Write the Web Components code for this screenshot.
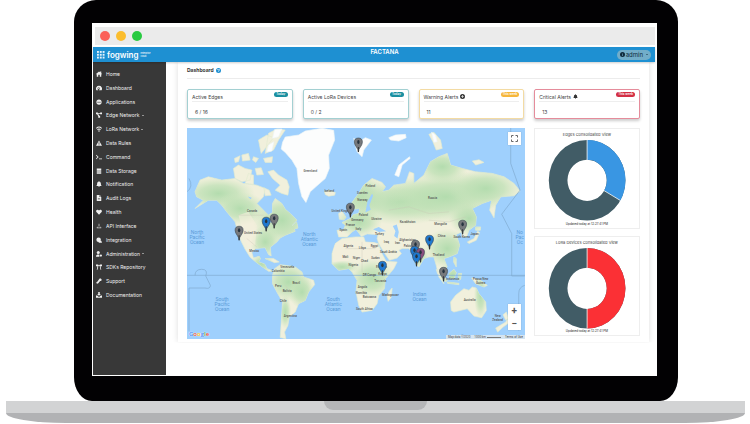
<!DOCTYPE html>
<html lang="en">
<head>
<meta charset="utf-8">
<title>Fogwing – Dashboard</title>
<style>
  body { margin: 0; background: #fff; font-family: Inter, "Open Sans", sans-serif; font-size: 5px; line-height: 8px; color: #444; }
</style>
</head>
<body>
<laptop-frame>
  <window-bar slot="bar"></window-bar>
  <app-header slot="header" user="admin">FACTANA</app-header>
  <side-nav slot="nav">
    <nav-item icon="home">Home</nav-item>
    <nav-item icon="gauge">Dashboard</nav-item>
    <nav-item icon="apps">Applications</nav-item>
    <nav-item icon="nodes" caret>Edge Network</nav-item>
    <nav-item icon="wifi" caret>LoRa Network</nav-item>
    <nav-item icon="warn">Data Rules</nav-item>
    <nav-item icon="terminal">Command</nav-item>
    <nav-item icon="db">Data Storage</nav-item>
    <nav-item icon="bell">Notification</nav-item>
    <nav-item icon="file">Audit Logs</nav-item>
    <nav-item icon="heart">Health</nav-item>
    <nav-item icon="api">API Interface</nav-item>
    <nav-item icon="puzzle">Integration</nav-item>
    <nav-item icon="admin" caret>Administration</nav-item>
    <nav-item icon="sdk">SDKs Repository</nav-item>
    <nav-item icon="support">Support</nav-item>
    <nav-item icon="docs">Documentation</nav-item>
  </side-nav>
  <dashboard-page>
    <span slot="title">Dashboard</span>
    <stat-card slot="stats" badge="Today" style="--line:#a3d0d2;--tag:#1a8fa0">Active Edges<span slot="value">6 / 16</span></stat-card>
    <stat-card slot="stats" badge="Today" style="--line:#a3d0d2;--tag:#1a8fa0">Active LoRa Devices<span slot="value">0 / 2</span></stat-card>
    <stat-card slot="stats" badge="This week" icon="plus" style="--line:#f3dba3;--tag:#f6b73c">Warning Alerts<span slot="value">11</span></stat-card>
    <stat-card slot="stats" badge="This week" icon="bell" style="--line:#e58c9b;--tag:#d32f45">Critical Alerts<span slot="value">13</span></stat-card>
    <world-map slot="map"></world-map>
    <donut-chart slot="charts" share="120" color="#3996e3" note="Updated today at 12:27:41 PM">Edges Consolidated View</donut-chart>
    <donut-chart slot="charts" share="180" color="#fb3035" note="Updated today at 12:27:41 PM">LoRa Devices Consolidated View</donut-chart>
  </dashboard-page>
</laptop-frame>

<script>
const define = (name, render) => customElements.define(name, class extends HTMLElement {
  constructor() { super(); this.attachShadow({ mode: 'open' }); }
  connectedCallback() { this.shadowRoot.innerHTML = render(this); }
});

const ICONS = {
  home: '<path d="M0 8 8 1l3 2V1h3v5l2 2-1 1-1-1v7h-4v-5H6v5H2V8L1 9z"/>',
  gauge: '<path fill-rule="evenodd" d="M8 2a8 8 0 0 1 7 12H1A8 8 0 0 1 8 2zm3 3-4 5a2 2 0 1 0 2 1zM3 9v2h2V9zM5 5v2h2V5z"/>',
  apps: '<path fill-rule="evenodd" d="M8 1a7 7 0 1 1 0 14A7 7 0 0 1 8 1zM4 7v3h3V7zm5 0v3h3V7z"/>',
  nodes: '<path d="M0 1h5v2h6V1h5v5h-5V5H6l3 5h2v5H6v-4L3 6H0z"/>',
  wifi: '<path d="M0 5a12 12 0 0 1 16 0l-2 2A9 9 0 0 0 2 7zm3 4a7 7 0 0 1 10 0l-2 2a4 4 0 0 0-6 0z"/><circle cx="8" cy="13" r="2"/>',
  warn: '<path fill-rule="evenodd" d="m8 1 8 14H0zM7 6v5h2V6zm0 6v2h2v-2z"/>',
  terminal: '<path d="m1 2 6 6-6 6-1-2 4-4-4-4zM8 12h8v2H8z"/>',
  db: '<path d="M2 1h12v4H2zm0 5h12v4H2zm0 5h12v4H2z"/>',
  bell: '<path d="M8 0a2 2 0 0 1 1 2c3 0 4 3 4 5 0 3 1 4 2 6H1c1-2 2-3 2-6 0-2 1-5 4-5a2 2 0 0 1 1-2zM6 14h4a2 2 0 0 1-4 0z"/>',
  file: '<path fill-rule="evenodd" d="M2 0h7v5h5v11H2zm8 0 4 4h-4zM5 8v1h6V8zm0 3v1h6v-1z"/>',
  heart: '<path d="M8 15 1 8c-3-5 4-9 7-4 3-5 10-1 7 4z"/>',
  api: '<path d="M7 2h2v5l5 4v3H2v-3l5-4zM4 10v2h8v-2L8 8z" opacity=".8"/>',
  puzzle: '<circle cx="7" cy="7" r="6"/><path d="M8 10h6l2 5H7z"/>',
  admin: '<circle cx="6" cy="4" r="4"/><path d="M0 15c0-4 2-6 6-6l3 1v5z"/><circle cx="13" cy="12" r="3"/>',
  sdk: '<path d="M0 1h6v2h4V1h6v5h-4l2 9h-2l-2-9V5H6v2L4 15H2l2-9H0z"/>',
  support: '<path d="M9 2c3-2 6 0 6 3 0 2-2 3-4 3l-5 6c-2 2-6 1-5-2 0-2 2-2 3-3z"/>',
  docs: '<path d="M6 0h4v5h3l-5 5-5-5h3zM0 9h3l5 4 5-4h3v6H0z"/>',
  plus: '<path fill-rule="evenodd" d="M8 0a8 8 0 1 1 0 16A8 8 0 0 1 8 0zM7 3v4H3v2h4v4h2V9h4V7H9V3z"/>',
  help: '<path fill-rule="evenodd" d="M8 0a8 8 0 1 1 0 16A8 8 0 0 1 8 0zM4 6h2c0-2 4-2 4 0 0 1-3 2-3 4h2c0-2 3-2 3-4 0-4-8-4-8 0zm3 5v2h2v-2z"/>',
  info: '<path fill-rule="evenodd" d="M8 0a8 8 0 1 1 0 16A8 8 0 0 1 8 0zM7 3v2h2V3zm0 3v7h2V6z"/>'
};
const icon = n => `<svg viewBox="0 0 16 16" fill="currentColor" aria-hidden="true">${ICONS[n]}</svg>`;

define('laptop-frame', () => `<style>
  :host { display: block; }
  .lid { margin: 0 72px 0 74px; padding: 23px 21px 25px 18px; background: #020103; border-radius: 22px 22px 18px 18px / 22px 22px 24px 24px; }
  .screen { background: #fff; padding: 4px 2px 1px 1px; }
  .cols { display: grid; grid-template-columns: 73px 1fr; }
  .base { margin: 0 5px 0 6px; border-radius: 0 0 60px 60px / 0 0 10px 10px; background: linear-gradient(#d2d3d4 0 12px, #b1b2b4 12px); height: 22px; display: flex; justify-content: center; }
  .notch { width: 14%; height: 9px; background: #b5b6b8; border-radius: 0 0 9px 9px; }
</style>
<div class="lid"><div class="screen"><slot name="bar"></slot><slot name="header"></slot>
<div class="cols"><slot name="nav"></slot><slot></slot></div></div></div>
<div class="base"><div class="notch"></div></div>`);

define('window-bar', () => `<style>
  :host { display: flex; gap: 6px; align-items: center; height: 18px; padding-left: 5px; margin: 0 0 2px 2px; background: #ebebeb; }
  i { width: 10px; height: 10px; border-radius: 50%; }
</style><i style="background:#fb6058"></i><i style="background:#fbbd2e"></i><i style="background:#28ca41"></i>`);

define('app-header', el => `<style>
  :host { position: relative; display: grid; grid-template-columns: 13fr auto 12fr; align-items: center; height: 15px; padding: 0 4px; background: #1e90d2; color: #fff; z-index: 1; box-shadow: 0 1px 2px #0003; }
  .logo { display: flex; align-items: center; gap: 2px; font: 600 8px/12px Inter, sans-serif; color: #fff; text-decoration: none; }
  .logo svg { width: 8px; height: 8px; }
  small { font: 500 2px/3px Inter, sans-serif; }
  h1 { margin: 0 0 5px; font: 600 6px/8px Inter, sans-serif; }
  button { justify-self: end; display: flex; align-items: center; gap: 1px; height: 10px; padding: 0 3px; border: 0; border-radius: 5px; background: #72adc9; color: #102a3c; font: 6px/10px Inter, sans-serif; }
  button svg { width: 5px; height: 5px; }
  button::after { content: ""; margin-left: 2px; border: 1px solid transparent; border-top-color: currentColor; border-bottom: 0; }
</style>
<a class="logo" href="#"><svg viewBox="0 0 17 17" fill="#e6f3fb">${[0, 6, 12].map(y => [0, 6, 12].map(x => `<rect x="${x}" y="${y}" width="4" height="4"/>`).join('')).join('')}</svg><span>fogwing</span><small>Enterprise<br>Cloud</small></a>
<h1><slot></slot></h1>
<button type="button">${icon('info')}${el.getAttribute('user')}</button>`);

define('side-nav', () => `<style>
  :host { display: block; background: #383838; color: #f0f0f0; padding: 5px 3px 73px; box-sizing: border-box; }
  nav { display: grid; grid-auto-rows: 1fr; min-height: 235px; }
</style><nav aria-label="Main"><slot></slot></nav>`);

define('nav-item', el => `<style>
  :host { display: block; align-self: center; }
  a { display: flex; align-items: center; gap: 4px; color: inherit; text-decoration: none; line-height: 8px; }
  svg { width: 6px; height: 6px; }
  .c { margin-left: -2px; border: 1px solid transparent; border-top-color: currentColor; border-bottom: 0; }
</style><a href="#">${icon(el.getAttribute('icon'))}<span><slot></slot></span>${el.hasAttribute('caret') ? '<i class="c"></i>' : ''}</a>`);

define('dashboard-page', () => `<style>
  :host { display: block; padding: 0 6px 0 12px; }
  main { padding: 4px 9px 3px; box-shadow: 0 0 6px #0002; clip-path: inset(0 -8px 0 -8px); }
  h2 { display: flex; align-items: center; gap: 2px; margin: 0 0 10px; padding-bottom: 4px; border-bottom: 1px solid #ececec; font: 700 5px/8px Inter, sans-serif; color: #333; }
  h2 svg { width: 5px; height: 5px; color: #1e90d2; }
  .stats { display: grid; grid-template-columns: repeat(4, 1fr); gap: 10px; margin-bottom: 9px; }
  .body { display: grid; grid-template-columns: 337fr 106fr; gap: 9px; align-items: start; }
  .charts { display: grid; gap: 7px; }
</style>
<main><h2><slot name="title"></slot>${icon('help')}</h2>
<div class="stats"><slot name="stats"></slot></div>
<div class="body"><slot name="map"></slot><div class="charts"><slot name="charts"></slot></div></div></main>`);

define('stat-card', el => `<style>
  :host { display: block; box-sizing: border-box; min-width: 0; height: 30px; padding: 2px 4px; border: 1px solid var(--line); border-radius: 2px; box-shadow: 0 2px 3px #0003; background: #fff; }
  .top { display: flex; align-items: center; gap: 2px; height: 9px; border-bottom: 1px solid #eee; white-space: nowrap; }
  .top svg { width: 5px; height: 5px; color: #333; }
  .tag { margin-left: auto; align-self: flex-start; min-width: 10px; padding: 0 2px; text-align: center; border-radius: 3px; background: var(--tag); color: #fff; font: 600 3px/5px Inter, sans-serif; }
  .val { padding: 6px 3px 0; line-height: 8px; }
</style><div class="top"><span><slot></slot></span>${el.hasAttribute('icon') ? icon(el.getAttribute('icon')) : ''}<span class="tag">${el.getAttribute('badge')}</span></div><div class="val"><slot name="value"></slot></div>`);

define('donut-chart', el => {
  const a = el.getAttribute('share') * Math.PI / 180;
  const pt = (rx, ry) => `${53 + rx * Math.sin(a)} ${42 - ry * Math.cos(a)}`;
  const seg = `M53 1A39 41 0 0 1 ${pt(39, 41)}L${pt(20, 21)}A20 21 0 0 0 53 21Z`;
  return `<style>
  :host { display: flex; flex-direction: column; align-items: center; border: 1px solid #eee; padding: 2px 0 1px; box-sizing: border-box; background: #fff; font-size: 4px; line-height: 8px; white-space: nowrap; }
  svg { display: block; width: 100%; }
  p { margin: 0; font-size: 3px; line-height: 5px; color: #222; }
</style><span><slot></slot></span>
<svg viewBox="0 0 106 84" role="img" aria-label="Donut chart"><path fill="#415c66" fill-rule="evenodd" d="M14 42a39 41 0 1 0 78 0a39 41 0 1 0-78 0zm19 0a20 21 0 1 1 40 0a20 21 0 1 1-40 0z"/><path fill="${el.getAttribute('color')}" d="${seg}"/><path stroke="#fff" stroke-width=".8" d="M53 1V22M${pt(19, 20)}L${pt(39, 41)}"/></svg>
<p>${el.getAttribute('note')}</p>`;
});

const LAND = [
  'M30 200 45 165 70 155 110 165 150 160 175 175 215 180 240 190 235 215 215 235 235 255 250 270 262 262 262 235 270 220 290 235 300 252 315 265 335 285 320 300 330 318 300 330 285 338 275 350 255 366 258 392 250 388 240 367 212 370 200 382 205 398 222 393 226 400 220 410 238 416 246 430 262 437 250 438 235 427 212 410 195 396 180 372 168 348 158 320 150 290 125 260 110 240 95 225 70 225 30 250 55 225 35 215Z',
  'M262 450 268 430 285 418 300 420 330 425 350 440 355 455 385 465 388 478 370 500 360 525 340 535 330 560 312 575 308 600 298 620 302 640 285 636 288 590 292 530 275 500 262 475Z',
  'M500 232 520 205 535 180 560 160 590 172 600 185 590 200 610 195 625 180 660 175 672 140 685 145 685 175 715 150 735 110 760 95 785 85 795 120 830 130 870 140 920 145 955 155 985 175 1003 198 985 212 945 215 930 240 925 278 912 255 918 225 890 235 860 250 872 275 870 300 850 315 843 335 830 335 828 320 812 328 822 360 815 385 790 395 775 400 785 425 770 440 760 430 768 455 775 475 760 455 752 420 745 395 730 395 715 400 700 425 690 415 683 385 670 370 650 370 640 375 648 385 635 398 612 405 598 385 580 355 575 340 578 328 545 326 528 334 512 312 500 320 485 335 460 335 455 315 475 314 480 300 470 292 495 280 505 268 520 265 523 250 505 252Z',
  'M440 385 450 355 470 340 510 335 535 335 540 350 565 352 578 355 590 385 602 408 635 410 625 430 600 460 597 490 580 510 575 535 560 555 530 560 520 540 512 500 515 465 500 440 490 430 460 435 440 415Z',
  'M795 530 810 510 835 490 850 495 860 485 872 488 880 505 900 530 902 555 888 577 865 572 845 550 805 560 797 555Z',
  'M605 512 612 497 620 488 618 515 608 528ZM462 282 460 265 470 258 482 276 476 284ZM418 200 432 195 450 202 448 210 430 213 420 208ZM930 608 960 590 966 580 970 592 952 605 936 620ZM952 568 962 560 968 580 960 584Z',
  'M752 432 785 465 780 470 756 445ZM790 445 805 432 812 442 805 460 792 458ZM785 470 820 474 820 478 786 474ZM818 445 828 444 825 462 818 465ZM858 458 880 462 905 480 895 485 870 475ZM805 395 812 400 812 425 804 410ZM845 350 865 340 876 318 882 322 872 345 850 355ZM870 305 885 305 884 315 870 315ZM240 400 265 400 282 410 268 412Z',
  'M145 130 160 120 180 130 200 135 195 165 170 170 150 160ZM190 145 205 150 205 178 180 175ZM148 100 165 92 160 110 150 112ZM170 90 190 85 195 105 172 108ZM205 95 220 100 212 112 202 105ZM235 100 262 95 260 112 240 112ZM220 45 245 30 265 38 240 70 228 85ZM250 25 275 12 300 15 280 45 265 75 240 85ZM248 140 265 135 280 150 305 165 312 185 308 210 290 205 270 195 285 180 262 160ZM210 130 228 128 235 148 215 150ZM236 188 252 195 258 210 240 212ZM860 108 880 104 895 112 870 120ZM730 28 745 22 765 45 770 70 752 75 742 50ZM318 305 334 290 338 308 325 312Z'
].join('');
const ICE = 'M288 72 292 52 300 36 340 30 360 18 410 10 445 16 448 45 430 90 432 130 420 160 395 182 375 200 362 232 350 215 340 175 335 130 320 105 300 82ZM505 40 520 50 540 38 558 45 535 75 530 95 515 80ZM628 150 640 120 672 95 674 100 650 120 640 155ZM610 38 630 30 660 28 662 38 640 48 615 45ZM738 22 750 30 755 50 745 52ZM268 14 290 12 280 35 262 40ZM250 60 266 50 260 78 245 80Z';
const LAKES = 'M563 312 580 305 602 318 580 320ZM622 302 634 298 640 320 636 340 626 332 630 318ZM540 262 546 230 560 205 563 212 552 240 556 254ZM242 286 262 284 270 292 256 292ZM188 214 200 218 196 222Z';
const GREEN = [[100,205,110,50],[165,250,80,50],[290,285,90,80],[240,350,45,50],[310,470,70,60],[350,500,40,50],[300,560,18,50],[530,215,70,70],[650,230,170,70],[780,215,170,80],[900,190,110,60],[850,280,60,50],[785,370,70,60],[560,460,70,60],[470,425,50,20],[520,290,70,45],[700,395,30,34],[800,450,40,40],[885,510,20,70],[770,125,80,50],[230,415,35,30]];
const LABELS = [['Greenland',310,172],['Iceland',329,192],['Canada',252,212],['United States',253,234],['Mexico',254,252],['Venezuela',287,268],['Colombia',278,272],['Brazil',296,284],['Peru',278,287],['Bolivia',287,292],['Chile',283,302],['Argentina',290,317],['Norway',362,201],['Finland',370,187],['Sweden',362,194],['Poland',363,216],['Ukraine',376,220],['Germany',357,221],['France',350,226],['Spain',343,231],['Italy',358,230],['United Kingdom',342,212],['Russia',432,199],['Kazakhstan',407,223],['Mongolia',440,225],['Turkey',379,235],['Iraq',386,243],['Iran',397,244],['Afghanistan',407,241],['Pakistan',409,247],['China',441,237],['Japan',474,235],['South Korea',461,238],['Algeria',348,247],['Libya',362,249],['Egypt',374,247],['Saudi Arabia',388,253],['Mali',345,258],['Niger',356,259],['Chad',364,262],['Sudan',375,259],['Nigeria',353,266],['Ethiopia',381,268],['Kenya',382,275],['DR Congo',369,276],['Tanzania',380,282],['Angola',362,288],['Namibia',361,294],['Botswana',369,298],['Madagascar',390,296],['South Africa',364,310],['Thailand',438,256],['Indonesia',452,280],['Papua New',480,280],['Guinea',480,284],['Australia',469,301],['New',497,317],['Zealand',497,321],['India',416,256]];
const OCEANS = [['North',197,234],['Pacific',197,239],['Ocean',197,244],['North',309,236],['Atlantic',309,241],['Ocean',309,246],['South',222,301],['Pacific',222,306],['Ocean',222,311],['South',333,301],['Atlantic',333,306],['Ocean',333,311],['Indian',419,296],['Ocean',419,301],['No',519,234],['Pac',519,239],['Oc',519,244]];
const PINS = [[239,240,0],[266,231,1],[274,228,0],[358,152,0],[350,217,0],[382,275,1],[415,254,0],[414,260,1],[420,262,2],[416,266,1],[429,249,1],[462,234,0],[443,281,0]];
const PIN_COLORS = ['#77797c', '#1f78cf', '#8a4f7d'];
const label = (cls, list) => list.map(([t, x, y]) => `<text class="${cls}" x="${x}" y="${y}">${t}</text>`).join('');

define('world-map', () => `<style>
  :host { position: relative; display: block; overflow: hidden; background: #9fd0fd; }
  svg.map { display: block; width: 100%; }
  text { font-family: Roboto, sans-serif; text-anchor: middle; }
  .p { font-size: 3px; font-weight: 500; fill: #555; }
  .o { font-size: 5px; fill: #5b9bd8; }
  .full, .zoom { position: absolute; right: 4px; background: #fff; box-shadow: 0 0 1px #0004; }
  .full { top: 4px; width: 13px; height: 13px; padding: 3px; border: 0; }
  .full svg { display: block; width: 7px; height: 7px; }
  .zoom { bottom: 9px; display: grid; width: 13px; }
  .zoom button { height: 13px; padding: 0; border: 0; background: none; color: #555; font: 700 10px/13px Roboto, sans-serif; }
  .legal { position: absolute; right: 0; bottom: 0; display: flex; gap: 4px; padding: 0 2px; background: #d5e4f0; font: 3px/4px Roboto, sans-serif; color: #444; }
  .legal a { color: inherit; text-decoration: none; }
  .scale { display: inline-block; width: 14px; margin-left: 1px; border-bottom: 1px solid #777; }
  .google { position: absolute; left: 2px; bottom: 1px; font: 600 6px/8px "Open Sans", sans-serif; text-shadow: 0 0 1px #fff, 0 0 1px #fff; }
</style>
<svg class="map" viewBox="187 128 337 211" role="img" aria-label="World map with device locations">
  <defs><clipPath id="land"><path d="${LAND}"/></clipPath>
  <radialGradient id="g"><stop offset="0" stop-color="#b3dcae"/><stop offset=".5" stop-color="#bee0b5" stop-opacity=".75"/><stop offset="1" stop-color="#cbe5bd" stop-opacity="0"/></radialGradient></defs>
  <g transform="translate(185 125) scale(.33333)">
    <path d="${LAND}" fill="#f1f0dc" stroke="#e3ebd0" stroke-width="2" stroke-linejoin="round"/>
    <g clip-path="url(#land)">${GREEN.map(([x, y, a, b]) => `<ellipse cx="${x}" cy="${y}" rx="${a}" ry="${b}" fill="url(#g)"/>`).join('')}
      <path d="M160 270l30-10 25 40-5 60-25 0zM440 345l130 5 20 45-145 15z" fill="#f5efdc" opacity=".6"/></g>
    <path d="${ICE}" fill="#fcfdfd" stroke="#eef6f6" stroke-width="2" stroke-linejoin="round"/>
    <path d="${LAKES}" fill="#9fd0fd"/>
    <path d="M6 450H1020M975 9V115L1003 195 948 267 978 325V452H1017M6 200q20-15 6-40M30 450q0-18 20-18t12 20l14 28q0 12-16 8H12v130M1017 480q-18 5-18 25v110" fill="none" stroke="#7fa9cf" stroke-width="2"/>
    <path d="M160 270H235M185 340l30 25M300 480l20 25M610 255l60-10 60 20 60-5M730 285l60 5 50-15M480 370h90M530 350v90" fill="none" stroke="#c9c6b5" stroke-width="1"/>
  </g>
  ${label('p', LABELS)}${label('o', OCEANS)}
  ${PINS.map(([x, y, c]) => `<g transform="translate(${x} ${y})"><path d="M0 0C0-4-4-6-4-10a4 4 0 0 1 8 0C4-6 0-4 0 0z" fill="${PIN_COLORS[c]}" stroke="#3b4650" stroke-width=".6"/><path d="M0-5V0" stroke="#333" stroke-width="1"/><ellipse cy="-10" rx="1.2" ry="2" fill="#26333f"/></g>`).join('')}
</svg>
<button class="full" type="button" aria-label="Full screen"><svg viewBox="0 0 7 7" fill="none" stroke="#666"><path d="M.5 2.5v-2h2M4.500.5h2v2M6.500 4.500v2h-2M2.500 6.500h-2v-2"/></svg></button>
<div class="zoom"><button type="button" aria-label="Zoom in">+</button><button type="button" aria-label="Zoom out">−</button></div>
<span class="google"><span style="color:#4285f4">G</span><span style="color:#ea4335">o</span><span style="color:#fbbc05">o</span><span style="color:#4285f4">g</span><span style="color:#34a853">l</span><span style="color:#ea4335">e</span></span>
<div class="legal"><span>Map data ©2020</span><span>1000 km<i class="scale"></i></span><a href="#">Terms of Use</a></div>`);
</script>
</body>
</html>
